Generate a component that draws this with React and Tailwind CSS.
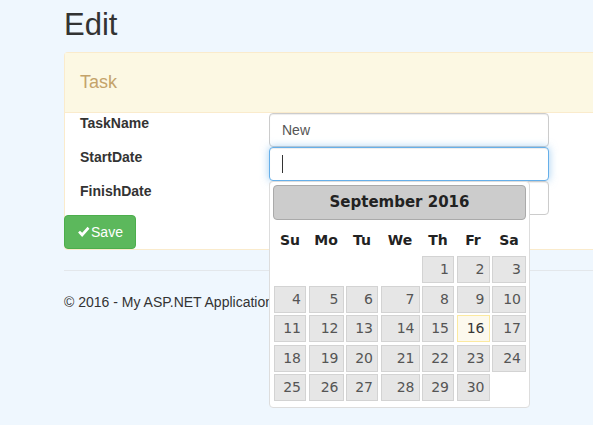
import React from 'react';

const colWidths = ['w-[32px]', 'w-[35px]', 'w-[32px]', 'w-[39px]', 'w-[32px]', 'w-[33px]', 'w-[34px]'];
const dayNames = ['Su', 'Mo', 'Tu', 'We', 'Th', 'Fr', 'Sa'];

function buildWeeks() {
    const cells = [null, null, null, null];
    for (let d = 1; d <= 30; d++) cells.push(d);
    while (cells.length % 7) cells.push(null);
    const weeks = [];
    for (let i = 0; i < cells.length; i += 7) weeks.push(cells.slice(i, i + 7));
    return weeks;
}

function Datepicker() {
    const weeks = buildWeeks();
    return (
        <div className="absolute left-[269px] top-[181px] w-[261px] bg-white border border-[#dddddd] rounded p-[3px] pb-[6px] font-['DejaVu_Sans',sans-serif]">
            <div className="h-[35px] flex items-center justify-center bg-[#cccccc] border border-[#aaaaaa] rounded text-[15px] font-bold text-[#222222]">
                September 2016
            </div>
            <div className="flex gap-[2.5px] pl-[1px] mt-[9px] h-[22px] items-center">
                {dayNames.map((n, i) => (
                    <div key={n} className={`${colWidths[i]} text-center text-[14px] font-bold text-[#222222]`}>{n}</div>
                ))}
            </div>
            <div className="flex flex-col gap-[2.5px] pl-[1px] mt-[5px]">
                {weeks.map((w, wi) => (
                    <div key={wi} className="flex gap-[2.5px]">
                        {w.map((d, i) => d === null ? (
                            <div key={i} className={`${colWidths[i]} h-[27px]`} />
                        ) : (
                            <div
                                key={i}
                                className={`${colWidths[i]} h-[27px] border text-right pr-[4px] text-[14px] leading-[25px] ${d === 16 ? 'bg-[#fcf9ee] border-[#fbe9a0] text-[#363636]' : 'bg-[#e6e6e6] border-[#d3d3d3] text-[#555555]'}`}
                            >
                                {d}
                            </div>
                        ))}
                    </div>
                ))}
            </div>
        </div>
    );
}

function App() {
    return (
        <div className="relative min-h-[425px] bg-[#eff7fe] font-['Liberation_Sans',Arial,sans-serif] text-[#333333] overflow-hidden">
            <div className="pl-[64px]">
                <h2 className="text-[31px] leading-[34px] pt-[8px] pb-[10px]">Edit</h2>
                <div className="border border-[#faebcc] border-r-0 rounded-l bg-white">
                    <div className="h-[60px] bg-[#fcf8e3] border-b border-[#faebcc] flex items-center pl-[15px] text-[18px] text-[#c4a36a]">
                        Task
                    </div>
                    <div className="flex flex-col">
                        <div className="flex h-[34px]">
                            <div className="w-[204px] pl-[15px] text-[14px] font-bold leading-[20px]">TaskName</div>
                            <div className="w-[280px] h-[34px] border border-[#cccccc] rounded bg-white flex items-center px-[12px] text-[14px] text-[#555555] shadow-[inset_0_1px_1px_rgba(0,0,0,0.075)]">New</div>
                        </div>
                        <div className="flex h-[34px]">
                            <div className="w-[204px] pl-[15px] text-[14px] font-bold leading-[20px]">StartDate</div>
                            <div className="w-[280px] h-[34px] border border-[#66afe9] rounded bg-white flex items-center px-[12px] shadow-[inset_0_1px_1px_rgba(0,0,0,0.075),0_0_8px_rgba(102,175,233,0.6)]">
                                <span className="w-px h-[18px] bg-[#333333]" />
                            </div>
                        </div>
                        <div className="flex h-[34px]">
                            <div className="w-[204px] pl-[15px] text-[14px] font-bold leading-[20px]">FinishDate</div>
                            <div className="w-[280px] h-[34px] border border-[#cccccc] rounded bg-white shadow-[inset_0_1px_1px_rgba(0,0,0,0.075)]" />
                        </div>
                        <div>
                            <button className="h-[34px] w-[72px] -ml-px bg-[#5cb85c] border border-[#4cae4c] rounded text-white text-[14px] flex items-center justify-center">
                                <svg className="w-[13px] h-[12px] mr-[1px]" viewBox="0 0 24 22" fill="currentColor">
                                    <path d="M2 12l3.5-3.5L9.5 12.5 19.5 1.5 23 5 9.5 20z" />
                                </svg>
                                Save
                            </button>
                        </div>
                    </div>
                </div>
                <div className="mt-[20px] border-t border-[#e3e7eb]" />
                <div className="pt-[21px] text-[14px] leading-[20px]">© 2016 - My ASP.NET Application</div>
            </div>
            <Datepicker />
        </div>
    );
}

export default App;
